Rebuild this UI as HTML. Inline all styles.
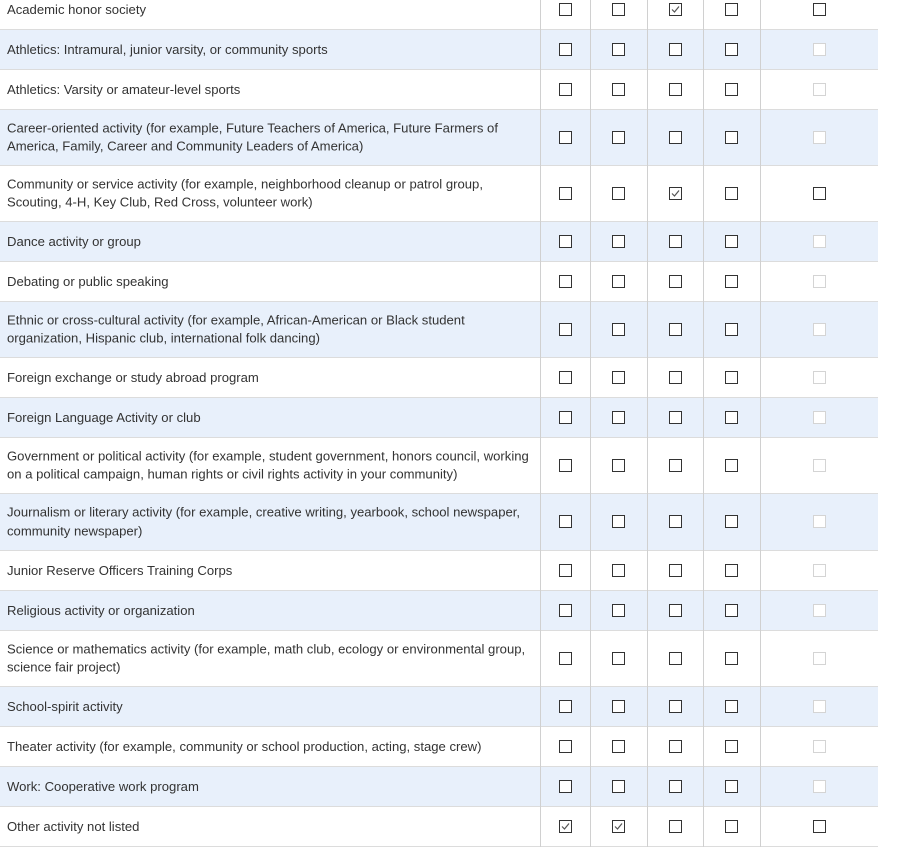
<!DOCTYPE html>
<html><head><meta charset="utf-8"><style>
body{margin:0;width:905px;height:856px;background:#fff;position:relative;overflow:hidden;font-family:"Liberation Sans",Arial,sans-serif;font-size:13.1px;color:#333}
.r{position:absolute;left:0;width:878px;border-bottom:1px solid #dcdcdc;box-sizing:border-box}
.b{background:#e8f0fb}
.t{position:absolute;left:7px;width:530px;line-height:18.5px;top:50%;transform:translateY(-50%)}
.v{position:absolute;top:0;bottom:-1px;width:1px;background:#d0d0d0}
.c{position:absolute;width:11px;height:11px;border:1px solid #333;background:#fff;top:50%;margin-top:-7px}
.d{border-color:#d4d4d4}
.c svg{position:absolute;left:1px;top:1px}
</style></head><body>
<div id="w"></div>
<script>
var rows=[
["Academic honor society",40,[0,0,1,0,0],0],
["Athletics: Intramural, junior varsity, or community sports",40,[0,0,0,0,2]],
["Athletics: Varsity or amateur-level sports",40,[0,0,0,0,2]],
["Career-oriented activity (for example, Future Teachers of America, Future Farmers of<br>America, Family, Career and Community Leaders of America)",56,[0,0,0,0,2]],
["Community or service activity (for example, neighborhood cleanup or patrol group,<br>Scouting, 4-H, Key Club, Red Cross, volunteer work)",56,[0,0,1,0,0]],
["Dance activity or group",40,[0,0,0,0,2]],
["Debating or public speaking",40,[0,0,0,0,2]],
["Ethnic or cross-cultural activity (for example, African-American or Black student<br>organization, Hispanic club, international folk dancing)",56,[0,0,0,0,2]],
["Foreign exchange or study abroad program",40,[0,0,0,0,2]],
["Foreign Language Activity or club",40,[0,0,0,0,2]],
["Government or political activity (for example, student government, honors council, working<br>on a political campaign, human rights or civil rights activity in your community)",56,[0,0,0,0,2]],
["Journalism or literary activity (for example, creative writing, yearbook, school newspaper,<br>community newspaper)",57,[0,0,0,0,2]],
["Junior Reserve Officers Training Corps",40,[0,0,0,0,2]],
["Religious activity or organization",40,[0,0,0,0,2]],
["Science or mathematics activity (for example, math club, ecology or environmental group,<br>science fair project)",56,[0,0,0,0,2]],
["School-spirit activity",40,[0,0,0,0,2]],
["Theater activity (for example, community or school production, acting, stage crew)",40,[0,0,0,0,2]],
["Work: Cooperative work program",40,[0,0,0,0,2]],
["Other activity not listed",40,[1,1,0,0,0]]
];
var cx=[565,618,675,731,819],vx=[540,590,647,703,760];
var y=-10,h='';
rows.forEach(function(r,i){
 h+='<div class="r'+(i%2?' b':'')+'" style="top:'+y+'px;height:'+r[1]+'px"><div class="t">'+r[0]+'</div>';
 vx.forEach(function(x){h+='<div class="v" style="left:'+x+'px"></div>'});
 r[2].forEach(function(s,j){
  h+='<div class="c'+(s==2?' d':'')+'" style="left:'+(cx[j]-6)+'px">'+(s==1?'<svg width="9" height="9" viewBox="0 0 9 9"><path d="M1 4.5 L3.5 7 L8 1.5" fill="none" stroke="#555" stroke-width="1.2"/></svg>':'')+'</div>';
 });
 h+='</div>';y+=r[1];
});
document.getElementById('w').innerHTML=h;
</script>
</body></html>
